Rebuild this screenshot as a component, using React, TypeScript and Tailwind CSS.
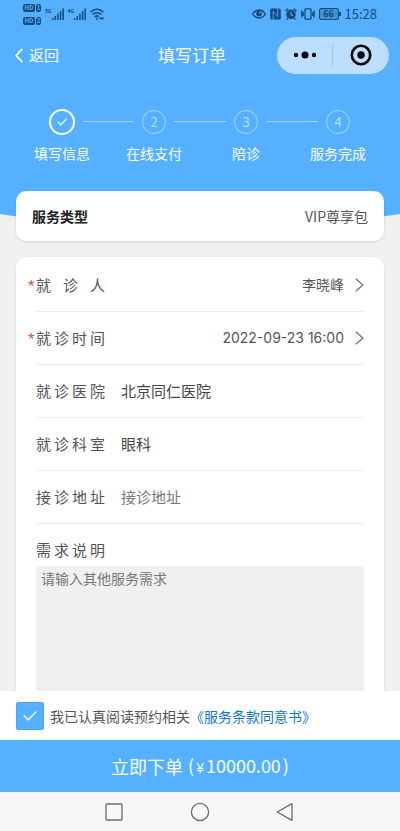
import React, { useState } from 'react'
import clsx from 'clsx'

const steps = ['填写信息', '在线支付', '陪诊', '服务完成']

const SignalBars: React.FC<{ network: string }> = ({ network }) => (
  <div className="flex items-start">
    <span className="text-[5px] leading-[6px] font-bold">{network}</span>
    <svg width="12" height="12" viewBox="0 0 12 12" fill="currentColor" aria-hidden="true">
      <rect x="0" y="10" width="1.5" height="2" />
      <rect x="2.6" y="8" width="1.5" height="4" />
      <rect x="5.2" y="5.6" width="1.5" height="6.4" />
      <rect x="7.8" y="3" width="1.5" height="9" />
      <rect x="10.4" y="0.4" width="1.5" height="11.6" />
    </svg>
  </div>
)

const SimBadge: React.FC<{ slot: string }> = ({ slot }) => (
  <div className="flex gap-px text-[6px] leading-[8px] font-bold text-[#55b1ff]">
    <span className="w-3 rounded-xs bg-[#174a77] text-center">HD</span>
    <span className="w-[5px] rounded-xs bg-[#174a77] text-center">{slot}</span>
  </div>
)

const StatusBar = () => (
  <div className="flex h-7 items-center justify-between px-[23px] text-[#174a77]">
    <div className="flex items-center gap-1">
      <div className="flex flex-col gap-[5px]">
        <SimBadge slot="1" />
        <SimBadge slot="2" />
      </div>
      <SignalBars network="5G" />
      <SignalBars network="4G" />
      <svg width="14" height="12" viewBox="0 0 14 12" fill="none" stroke="currentColor" strokeWidth="1.5" aria-hidden="true">
        <path d="M0.6 4.2C4.2 0.3 9.8 0.3 13.4 4.2" />
        <path d="M2.7 6.6C5.2 4 8.8 4 11.3 6.6" />
        <path d="M4.7 8.9C6.1 7.6 7.6 7.6 8.8 8.7" />
        <circle cx="6.8" cy="10.7" r="1" fill="currentColor" stroke="none" />
        <path d="M9.5 10.4H13.5" strokeWidth="1.8" />
      </svg>
    </div>
    <div className="flex items-center gap-1">
      <svg width="14" height="12" viewBox="0 0 14 12" fill="none" stroke="currentColor" strokeWidth="1.4" aria-hidden="true">
        <path d="M0.7 6C3.8 0.6 10.2 0.6 13.3 6C10.2 11.4 3.8 11.4 0.7 6Z" />
        <circle cx="7" cy="5.6" r="2.9" fill="currentColor" stroke="none" />
        <circle cx="8" cy="4.6" r="0.9" fill="#55b1ff" stroke="none" />
      </svg>
      <svg width="11" height="12" viewBox="0 0 11 12" aria-hidden="true">
        <rect x="0.2" y="0.4" width="10.6" height="11.2" rx="1.6" fill="currentColor" />
        <path d="M3.2 12V3.4M7.8 0V8.6" fill="none" stroke="#55b1ff" strokeWidth="0.9" />
        <path d="M3.2 3.2L7.8 8.8" fill="none" stroke="#55b1ff" strokeWidth="0.7" />
      </svg>
      <svg width="12" height="12" viewBox="0 0 12 12" aria-hidden="true">
        <circle cx="6" cy="6.4" r="4.8" fill="currentColor" />
        <path d="M0.6 3.2L3.2 0.8M11.4 3.2L8.8 0.8M2.8 10.2L1.6 11.6M9.2 10.2L10.4 11.6" stroke="currentColor" strokeWidth="1.5" />
        <path d="M6 3.6V6.6L8 7.8" fill="none" stroke="#55b1ff" strokeWidth="1.1" />
      </svg>
      <svg width="14" height="12" viewBox="0 0 14 12" fill="none" stroke="currentColor" strokeWidth="1.3" aria-hidden="true">
        <rect x="4" y="0.8" width="6" height="10.4" rx="0.8" />
        <path d="M2.2 4V8M11.8 4V8M0.8 2.4V9.6M13.2 2.4V9.6" />
      </svg>
      <div className="flex items-center">
        <span className="h-3 w-5 rounded-xs border border-[#174a77] bg-[#3f8fd2] text-center text-[9px] leading-[10px] font-bold">66</span>
        <span className="h-1 w-[2px] bg-[#174a77]" />
      </div>
      <time className="text-[13px] leading-4">15:28</time>
    </div>
  </div>
)

const NavBar = () => (
  <div className="grid h-[54px] grid-cols-3 items-center pr-[11px] pl-[15px] text-white">
    <button type="button" className="flex items-center gap-[6px] text-[15px] leading-5">
      <svg width="8" height="15" viewBox="0 0 8 15" fill="none" stroke="currentColor" strokeWidth="1.8" aria-hidden="true">
        <path d="M7.2 0.8L1.2 7.5L7.2 14.2" />
      </svg>
      返回
    </button>
    <h1 className="pr-5 text-center text-[17px] leading-6">填写订单</h1>
    <div className="flex h-[37px] w-28 items-center justify-self-end rounded-full bg-[#bcdfff] text-black">
      <button type="button" aria-label="更多" className="flex flex-1 justify-center">
        <svg width="24" height="8" viewBox="0 0 24 8" fill="currentColor">
          <circle cx="3" cy="4" r="2.2" />
          <circle cx="12" cy="4" r="3.5" />
          <circle cx="21" cy="4" r="2.2" />
        </svg>
      </button>
      <span className="h-[22px] w-px bg-[#a3c7e8]" />
      <button type="button" aria-label="关闭" className="flex flex-1 justify-center">
        <svg width="22" height="22" viewBox="0 0 22 22">
          <circle cx="11" cy="11" r="9.2" fill="none" stroke="currentColor" strokeWidth="2.6" />
          <circle cx="11" cy="11" r="3.7" fill="currentColor" />
        </svg>
      </button>
    </div>
  </div>
)

const Steps: React.FC<{ current: number }> = ({ current }) => (
  <ol className="grid grid-cols-4 px-4 pt-[26px] text-white">
    {steps.map((name, i) => (
      <li key={name} className="flex flex-col items-center gap-2">
        <div className="flex h-[27px] w-full items-center gap-2">
          <span className={clsx('h-px flex-1', i > 0 && 'bg-[#a9d6fb]')} />
          {i === current ? (
            <span className="flex size-[26px] items-center justify-center rounded-full border-2 border-white">
              <svg width="10" height="8" viewBox="0 0 10 8" fill="none" stroke="currentColor" strokeWidth="1.2" aria-hidden="true">
                <path d="M0.6 3.6L3.8 6.8L9.4 1" />
              </svg>
            </span>
          ) : (
            <span className="flex size-6 items-center justify-center rounded-full border border-[#a6defd] text-[13px] leading-4 text-[#b5e2fd]">
              {i + 1}
            </span>
          )}
          <span className={clsx('h-px flex-1', i < steps.length - 1 && 'bg-[#a9d6fb]')} />
        </div>
        <span className="text-[14px] leading-5">{name}</span>
      </li>
    ))}
  </ol>
)

const labelClass = 'w-[69px] shrink-0 text-[15px] leading-5 text-[#555] [text-align-last:justify]'

const PickerRow: React.FC<{ label: string; value: string }> = ({ label, value }) => (
  <button type="button" className="relative flex h-[53px] w-full items-center justify-between border-b border-[#ececec]">
    <span aria-hidden="true" className="absolute -left-2 pt-1 font-['Liberation_Sans',sans-serif] text-[17px] leading-5 text-[#d9533c]">
      *
    </span>
    <span className={labelClass}>{label}</span>
    <span className="flex items-center gap-[11px] font-['Inter','Noto_Sans_CJK_SC',sans-serif] text-[14px] leading-5 text-[#555]">
      {value}
      <svg width="9" height="14" viewBox="0 0 9 14" fill="none" stroke="#74807f" strokeWidth="1.5" aria-hidden="true">
        <path d="M0.8 0.8L7.8 7L0.8 13.2" />
      </svg>
    </span>
  </button>
)

const InputRow: React.FC<{ id: string; label: string; value?: string; placeholder?: string }> = ({
  id,
  label,
  value,
  placeholder,
}) => (
  <div className="flex h-[53px] items-center gap-4 border-b border-[#ececec]">
    <label htmlFor={id} className={labelClass}>
      {label}
    </label>
    <input
      id={id}
      type="text"
      defaultValue={value}
      placeholder={placeholder}
      className="min-w-0 flex-1 text-[15px] leading-5 text-[#444] outline-none placeholder:text-[#777]"
    />
  </div>
)

const AgreementBar = () => {
  const [agreed, setAgreed] = useState(true)

  return (
    <div className="flex h-[49px] items-center bg-white px-4 text-[14px] leading-5 text-[#555]">
      <span className="grid place-items-center">
        <input
          id="agree"
          type="checkbox"
          checked={agreed}
          onChange={(e) => setAgreed(e.target.checked)}
          className="col-start-1 row-start-1 size-7 appearance-none rounded-xs border border-[#4da5f0] bg-white checked:bg-[#55b1ff]"
        />
        {agreed && (
          <svg
            width="14"
            height="10"
            viewBox="0 0 14 10"
            fill="none"
            stroke="#fff"
            strokeWidth="1.3"
            className="pointer-events-none col-start-1 row-start-1"
            aria-hidden="true"
          >
            <path d="M0.8 4.2L5.2 8.8L13.2 0.8" />
          </svg>
        )}
      </span>
      <label htmlFor="agree" className="pl-[6px]">
        我已认真阅读预约相关
      </label>
      <a href="#terms" className="text-[#1476c6]">
        《服务条款同意书》
      </a>
    </div>
  )
}

const SystemNav = () => (
  <div className="flex h-[39px] items-center justify-center gap-[66px] bg-[#f7f7f7] text-[#6b6b6b]">
    <button type="button" aria-label="最近任务">
      <svg width="20" height="20" viewBox="0 0 20 20" fill="none" stroke="currentColor" strokeWidth="1.3">
        <rect x="2" y="2" width="16" height="16" rx="1" />
      </svg>
    </button>
    <button type="button" aria-label="主页">
      <svg width="20" height="20" viewBox="0 0 20 20" fill="none" stroke="currentColor" strokeWidth="1.3">
        <circle cx="10" cy="10" r="8.6" />
      </svg>
    </button>
    <button type="button" aria-label="后退">
      <svg width="20" height="20" viewBox="0 0 20 20" fill="none" stroke="currentColor" strokeWidth="1.3" strokeLinejoin="round">
        <path d="M16 1.6V18.4L1.2 10Z" />
      </svg>
    </button>
  </div>
)

export default function App() {
  return (
    <div className="flex h-dvh flex-col bg-[#f0f0f0] font-['Noto_Sans_CJK_SC',sans-serif]">
      <main className="relative isolate min-h-0 flex-1 overflow-y-auto [scrollbar-width:none]">
        <div className="absolute inset-x-0 top-0 -z-10">
          <div className="h-[214px] bg-[#55b1ff]" />
          <svg viewBox="0 0 400 16" preserveAspectRatio="none" className="block h-4 w-full" aria-hidden="true">
            <path d="M0 0Q200 32 400 0Z" fill="#55b1ff" />
          </svg>
        </div>

        <header>
          <StatusBar />
          <NavBar />
          <Steps current={0} />
        </header>

        <section className="mx-4 mt-7 flex h-[50px] items-center justify-between rounded-[10px] bg-white px-4 shadow-sm">
          <h2 className="text-[14px] leading-5 font-bold text-[#222]">服务类型</h2>
          <span className="text-[14px] leading-5 text-[#555]">VIP尊享包</span>
        </section>

        <form className="mx-4 mt-4 mb-4 rounded-[10px] bg-white px-5 pt-[2px] pb-5 shadow-sm">
          <PickerRow label="就诊人" value="李晓峰" />
          <PickerRow label="就诊时间" value="2022-09-23 16:00" />
          <InputRow id="hospital" label="就诊医院" value="北京同仁医院" />
          <InputRow id="department" label="就诊科室" value="眼科" />
          <InputRow id="address" label="接诊地址" placeholder="接诊地址" />
          <div className="flex flex-col gap-[6px] pt-4">
            <label htmlFor="remark" className={labelClass}>
              需求说明
            </label>
            <textarea
              id="remark"
              placeholder="请输入其他服务需求"
              className="block h-40 w-full resize-none rounded-sm bg-[#f0f0f0] px-[5px] py-[2px] text-[14px] leading-5 text-[#444] outline-none placeholder:text-[#777]"
            />
          </div>
        </form>
      </main>

      <footer>
        <AgreementBar />
        <button type="button" className="flex h-[52px] w-full items-center justify-center gap-[5px] bg-[#55b1ff] text-[18px] leading-6 text-white">
          立即下单
          <span className="flex items-baseline gap-[2px]">
            <span>(</span>
            <span className="text-[14px]">¥</span>
            <span>10000.00</span>
            <span>)</span>
          </span>
        </button>
        <SystemNav />
      </footer>
    </div>
  )
}
